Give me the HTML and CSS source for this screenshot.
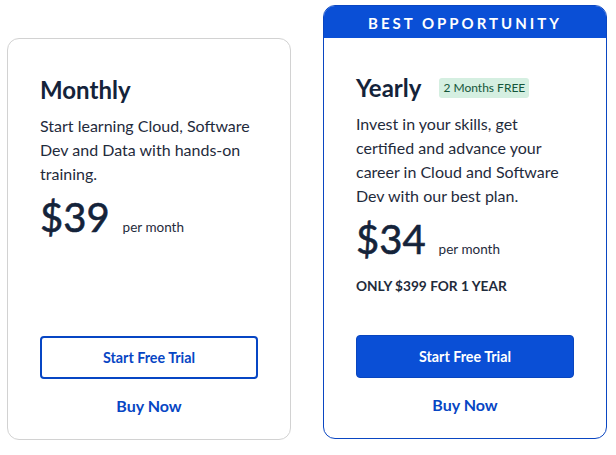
FILE: index.html
```html
<!DOCTYPE html>
<html>
<head>
<meta charset="utf-8">
<link rel="stylesheet" href="styles.css">
</head>
<body>
<div class="plans">
  <div class="card card-monthly">
    <div class="body">
      <h2 class="title">Monthly</h2>
      <p class="desc">Start learning Cloud, Software Dev and Data with hands-on training.</p>
      <div class="price"><span class="amount">$39</span><span class="per">per month</span></div>
      <div class="actions">
        <a class="btn btn-outline">Start Free Trial</a>
        <a class="buy">Buy Now</a>
      </div>
    </div>
  </div>
  <div class="card card-yearly">
    <div class="banner">BEST OPPORTUNITY</div>
    <div class="body">
      <div class="title-row">
        <h2 class="title">Yearly</h2>
        <span class="badge">2 Months FREE</span>
      </div>
      <p class="desc desc-narrow">Invest in your skills, get certified and advance your career in Cloud and Software Dev with our best plan.</p>
      <div class="price"><span class="amount">$34</span><span class="per">per month</span></div>
      <div class="note">ONLY $399 FOR 1 YEAR</div>
      <div class="actions">
        <a class="btn btn-solid">Start Free Trial</a>
        <a class="buy">Buy Now</a>
      </div>
    </div>
  </div>
</div>
</body>
</html>
```

FILE: styles.css
```css
* { box-sizing: border-box; }
html, body { margin: 0; padding: 0; background: #ffffff; }
body {
  font-family: Lato, "Open Sans", "Liberation Sans", sans-serif;
  color: #1b2a40;
}
.plans {
  display: flex;
  align-items: stretch;
  gap: 32px;
  padding: 5px 9px 16px 7px;
  height: 455px;
}
.card {
  width: 284px;
  display: flex;
  flex-direction: column;
  border-radius: 12px;
  background: #fff;
}
.card-monthly {
  margin-top: 33px;
  border: 1px solid #d2d2d2;
  height: 402px;
}
.card-yearly {
  border: 1px solid #0a46c2;
  height: 434px;
  overflow: hidden;
}
.banner {
  height: 33px;
  padding-top: 2px;
  background: #0a4fd6;
  color: #fff;
  font-weight: 700;
  font-size: 15px;
  letter-spacing: 3px;
  display: flex;
  align-items: center;
  justify-content: center;
  margin: -1px -1px 0;
}
.body {
  flex: 1;
  display: flex;
  flex-direction: column;
  padding: 36px 32px 21px;
}
.card-yearly .body { padding-top: 35px; }
.title {
  margin: 0;
  font-size: 24px;
  font-weight: 700;
  line-height: 29px;
  color: #14233a;
}
.title-row {
  display: flex;
  align-items: center;
  gap: 18px;
}
.badge {
  background: #d5efe1;
  color: #14563a;
  font-size: 12px;
  line-height: 20px;
  padding: 0 4px;
  margin-top: 1px;
  border-radius: 3px;
}
.desc {
  margin: 10px 0 0;
  font-size: 16px;
  line-height: 24px;
  color: #1f2b3c;
}
.desc-narrow { max-width: 212px; }
.price {
  display: flex;
  align-items: baseline;
  margin-top: 9px;
}
.amount {
  font-size: 40px;
  line-height: 44px;
  font-weight: 400;
  color: #14233a;
  -webkit-text-stroke: 0.6px #14233a;
}
.per {
  font-size: 13.5px;
  margin-left: 13px;
  color: #1f2b3c;
}
.note {
  margin-top: 16px;
  font-size: 13.7px;
  font-weight: 700;
  color: #1f2b3c;
}
.actions {
  margin-top: auto;
  display: flex;
  flex-direction: column;
  align-items: stretch;
}
.btn {
  height: 43px;
  border-radius: 4px;
  display: flex;
  align-items: center;
  justify-content: center;
  font-size: 14.3px;
  font-weight: 700;
}
.btn-outline {
  border: 2px solid #0746c4;
  color: #0746c4;
}
.btn-solid {
  background: #0a4fd6;
  border: 1px solid #0845bf;
  color: #fff;
}
.buy {
  margin-top: 15px;
  text-align: center;
  font-size: 16px;
  font-weight: 700;
  line-height: 24px;
  color: #0746c4;
}
```
